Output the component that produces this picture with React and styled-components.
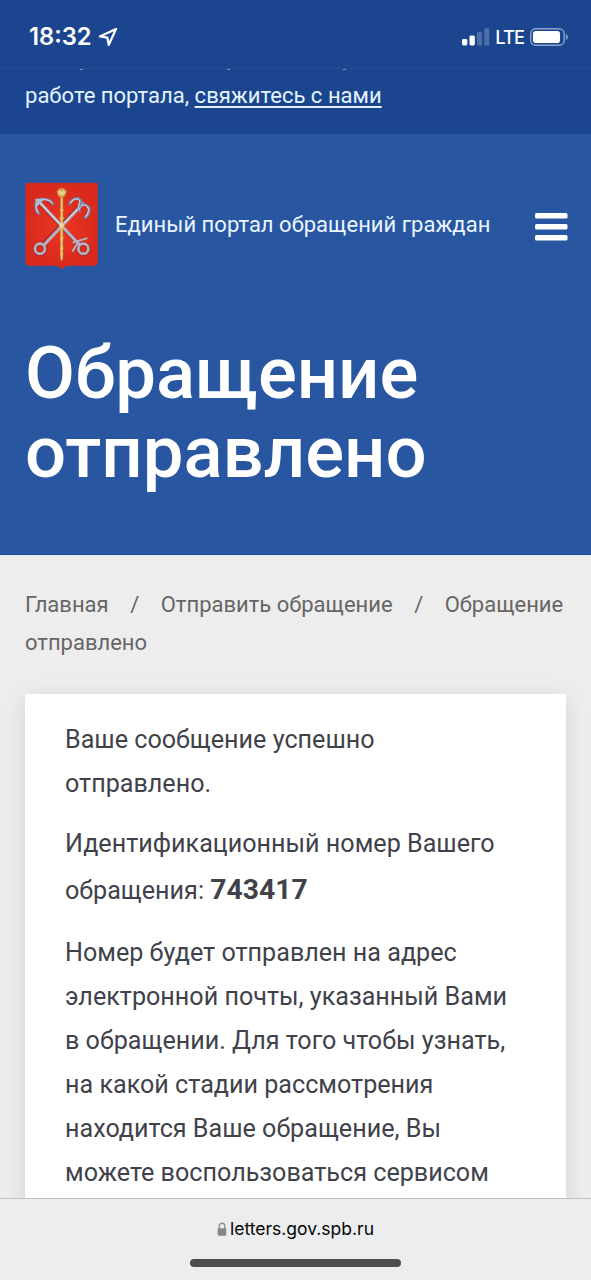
import React from 'react';
import styled, { createGlobalStyle } from 'styled-components';

const Global = createGlobalStyle`
  * { box-sizing: border-box; }
  body { margin: 0; background: #ededed; font-family: Roboto, sans-serif; }
`;

const Screen = styled.div`
  width: 591px;
  height: 1280px;
  overflow: hidden;
  display: flex;
  flex-direction: column;
  background: #ededed;
`;

const StatusBar = styled.div`
  height: 69px;
  flex: none;
  display: flex;
  align-items: center;
  justify-content: space-between;
  padding: 5px 22px 0 29px;
  background: #1b458f;
  border-bottom: 1px solid #244e95;
  color: #fff;
  font-family: Inter, sans-serif;
`;

const StatusGroup = styled.div`
  display: flex;
  align-items: center;
  gap: ${({ $gap }) => $gap}px;
`;

const Clock = styled.span`
  font-size: 23.7px;
  font-weight: 600;
  line-height: 28px;
`;

const Network = styled.span`
  font-size: 18.4px;
  font-weight: 500;
  line-height: 24px;
  letter-spacing: -1px;
  margin-right: 1px;
`;

const Notice = styled.div`
  height: 65px;
  flex: none;
  background: #1b458f;
  color: #e4f3fd;
  font-size: 22.06px;
  line-height: 30px;
`;

const NoticeText = styled.p`
  margin: 0;
  padding: 10px 25px 0;
`;

const Descenders = styled.svg`
  display: block;
`;

const NoticeLink = styled.a`
  color: inherit;
  text-decoration: underline;
  text-decoration-thickness: 1.5px;
  text-underline-offset: 3px;
  text-decoration-skip-ink: none;
`;

const Header = styled.header`
  height: 421px;
  flex: none;
  background: #2856a1;
  color: #fff;
  padding: 48px 23px 0 25px;
  border-bottom: 1px solid #1f4b95;
`;

const Brand = styled.div`
  display: flex;
  align-items: center;
  height: 88px;
`;

const BrandName = styled.span`
  flex: 1;
  margin-left: 17px;
  padding-bottom: 2px;
  font-size: 22px;
  line-height: 30px;
  color: #e9f5ff;
  letter-spacing: 0.03px;
  white-space: nowrap;
`;

const Title = styled.h1`
  margin: 64px 0 0;
  font-size: 72.5px;
  font-weight: 500;
  line-height: 79px;
`;

const Main = styled.main`
  flex: 1;
  min-height: 0;
  overflow: hidden;
  padding: 31px 25px 0;
`;

const Crumbs = styled.nav`
  width: 545px;
  font-size: 22px;
  line-height: 38px;
  color: #666;
`;

const Slash = styled.span`
  margin: 0 21.5px;
`;

const Card = styled.article`
  margin-top: 32px;
  height: 600px;
  padding: 24px 40px;
  background: #fff;
  color: #3f424a;
  box-shadow: 0 4px 20px rgba(0, 0, 0, 0.11);
`;

const Paragraph = styled.p`
  margin: 0 0 ${({ $after }) => $after || 16}px;
  font-size: 25.15px;
  line-height: 44px;
  white-space: nowrap;
`;

const Code = styled.strong`
  font-size: 28.3px;
  font-weight: 700;
  line-height: 47px;
`;

const BrowserBar = styled.footer`
  height: 82px;
  flex: none;
  display: flex;
  flex-direction: column;
  align-items: center;
  background: #ecedee;
  border-top: 1px solid #bfc1c1;
  padding-top: 18px;
`;

const Address = styled.div`
  display: flex;
  align-items: center;
  gap: 3px;
  font-family: Inter, sans-serif;
  font-size: 17.5px;
  line-height: 24px;
  color: #050505;
`;

const HomeIndicator = styled.div`
  width: 211px;
  height: 8px;
  margin-top: 18px;
  border-radius: 4px;
  background: #4c4d4e;
`;

function LocationIcon() {
  return (
    <svg width="20" height="20" viewBox="0 0 20 20" fill="none" stroke="#fff" strokeWidth="2.2" strokeLinejoin="round">
      <path d="M18 2 1.8 9.4l7.6 1.3 1.3 7.3Z" />
    </svg>
  );
}

function SignalIcon() {
  return (
    <svg width="28" height="18" viewBox="0 0 28 18" fill="#fff">
      <rect x="0" y="11" width="5.3" height="6.5" rx="1.4" />
      <rect x="7.5" y="7.6" width="5.3" height="9.9" rx="1.4" />
      <rect x="15" y="4" width="5" height="13.5" rx="1.2" fillOpacity=".22" />
      <rect x="22.3" y="0.3" width="5" height="17.2" rx="1.2" fillOpacity=".22" />
    </svg>
  );
}

function BatteryIcon() {
  return (
    <svg width="39" height="18" viewBox="0 0 39 18">
      <rect x=".8" y=".8" width="33.4" height="16.4" rx="4.8" fill="none" stroke="#8da3cb" strokeWidth="1.4" />
      <rect x="3" y="3" width="27" height="12" rx="2.8" fill="#fff" />
      <path d="M36 6c2.4 1 2.4 5 0 6Z" fill="#8da3cb" />
    </svg>
  );
}

function Emblem() {
  return (
    <svg width="73" height="88" viewBox="45 36 219 264">
      <defs>
        <radialGradient id="field">
          <stop offset="0" stopColor="#ec3824" />
          <stop offset="1" stopColor="#d8291c" />
        </radialGradient>
        <linearGradient id="gold" x1="0" x2="1">
          <stop offset="0" stopColor="#b77f35" />
          <stop offset=".5" stopColor="#f3d37b" />
          <stop offset="1" stopColor="#b07530" />
        </linearGradient>
      </defs>
      <path d="M52 39H259Q263 39 263 44V276Q263 286 252 287H173Q162 288 155 297Q148 288 138 287H58Q47 286 47 276V44Q47 39 52 39Z" fill="url(#field)" stroke="#b83543" strokeWidth="2" />
      <g fill="none" stroke="#8c3038" strokeWidth="14" strokeLinecap="round" opacity=".55">
        <path d="M84 94 208 225M215 104 99 222" />
        <circle cx="91" cy="237" r="15" />
        <circle cx="220" cy="237" r="15" />
      </g>
      <g fill="none" stroke="#b4b3c3" strokeWidth="9" strokeLinecap="round">
        <path d="M86 94 207 223" />
        <path d="M219 101 104 223" />
        <circle cx="90" cy="236" r="15" strokeWidth="8" />
        <circle cx="220" cy="236" r="15" strokeWidth="8" />
        <path d="M190 217 230 205M188 243 205 216" strokeWidth="6" />
      </g>
      <path d="M88 96 150 162M212 108 160 161" stroke="#e6e4e9" strokeWidth="3" />
      <g fill="none" stroke="#7185ad" strokeWidth="8" strokeLinecap="round" strokeLinejoin="round">
        <path d="M80 90C100 84 122 87 128 102M80 90C76 106 76 124 87 131" />
        <path d="M179 101C184 88 202 79 212 91C219 101 198 108 209 123" />
        <path d="M212 106C230 99 242 113 237 127C235 135 231 140 225 143" />
      </g>
      <g fill="none" stroke="#c6cbdb" strokeWidth="4" strokeLinecap="round" strokeLinejoin="round">
        <path d="M81 90C100 85 119 89 126 98M80 92C77 106 78 120 85 127" />
        <path d="M182 98C188 88 201 82 209 92C213 100 200 105 208 119" />
        <path d="M214 106C228 101 239 113 235 125C233 133 230 137 227 139" />
      </g>
      <path d="M76 86 103 88 81 110Z" fill="#aeb9d1" />
      <path d="M151 82H160L160 263 155 274 150 263Z" fill="url(#gold)" />
      <path d="M144 78 140 65 147 56 155 53 164 56 171 65 165 79 155 84Z" fill="#ce9a4b" />
      <path d="M145 66 150 59 155 66 161 59 166 66 161 76H149Z" fill="#efcf90" />
      <path d="M150 120h10M149 145h12M149 175h12M150 205h10M150 235h10M151 252h8" stroke="#e9bd63" strokeWidth="6" />
      <circle cx="155" cy="166" r="7" fill="#ead6a0" />
    </svg>
  );
}

const MenuGlyph = styled.svg`
  margin-top: 2px;
`;

function MenuIcon() {
  return (
    <MenuGlyph width="33" height="28" viewBox="0 0 33 28" fill="#fff">
      <rect width="32.5" height="5.6" rx="1.5" />
      <rect y="11" width="32.5" height="5.6" rx="1.5" />
      <rect y="22" width="32.5" height="5.6" rx="1.5" />
    </MenuGlyph>
  );
}

function LockIcon() {
  return (
    <svg width="10" height="15" viewBox="0 0 10 15">
      <path d="M2.2 7V4.2C2.2 .2 7.8 .2 7.8 4.2V7" fill="none" stroke="#858687" strokeWidth="1.3" />
      <rect x=".7" y="6.2" width="8.6" height="7.6" rx="1.3" fill="#858687" />
    </svg>
  );
}

export default function App() {
  return (
    <Screen>
      <Global />
      <StatusBar>
        <StatusGroup $gap={6}>
          <Clock>18:32</Clock>
          <LocationIcon />
        </StatusGroup>
        <StatusGroup $gap={5}>
          <SignalIcon />
          <Network>LTE</Network>
          <BatteryIcon />
        </StatusGroup>
      </StatusBar>
      <Notice>
        <Descenders width="591" height="2" fill="#6f93c6">
          <rect x="80" width="3" height="1" />
          <rect x="227" width="3" height="1" />
          <rect x="343" width="3" height="1" />
        </Descenders>
        <NoticeText>
          работе портала, <NoticeLink>свяжитесь с нами</NoticeLink>
        </NoticeText>
      </Notice>
      <Header>
        <Brand>
          <Emblem />
          <BrandName>Единый портал обращений граждан</BrandName>
          <MenuIcon />
        </Brand>
        <Title>
          Обращение
          <br />
          отправлено
        </Title>
      </Header>
      <Main>
        <Crumbs>
          Главная<Slash>/</Slash>Отправить обращение<Slash>/</Slash>Обращение
          <br />
          отправлено
        </Crumbs>
        <Card>
          <Paragraph>
            Ваше сообщение успешно
            <br />
            отправлено.
          </Paragraph>
          <Paragraph $after={18}>
            Идентификационный номер Вашего
            <br />
            обращения: <Code>743417</Code>
          </Paragraph>
          <Paragraph>
            Номер будет отправлен на адрес
            <br />
            электронной почты, указанный Вами
            <br />в обращении. Для того чтобы узнать,
            <br />
            на какой стадии рассмотрения
            <br />
            находится Ваше обращение, Вы
            <br />
            можете воспользоваться сервисом
          </Paragraph>
        </Card>
      </Main>
      <BrowserBar>
        <Address>
          <LockIcon />
          letters.gov.spb.ru
        </Address>
        <HomeIndicator />
      </BrowserBar>
    </Screen>
  );
}
